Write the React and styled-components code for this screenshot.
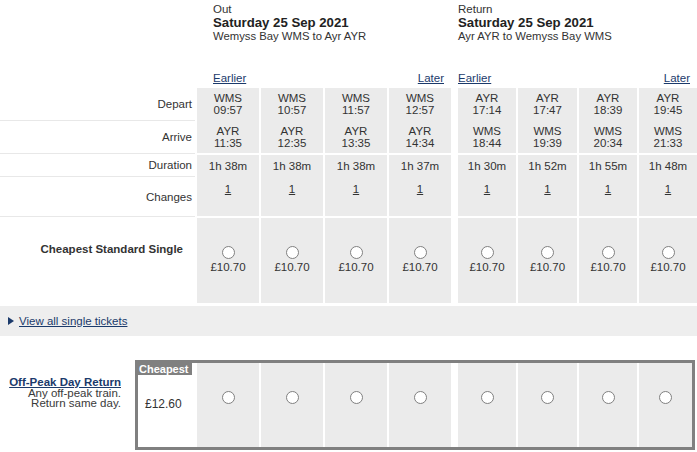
import styled, { createGlobalStyle } from 'styled-components';

const cellGrey = '#ebebeb';
const link = '#1b3a6b';
const text = '#333';

const COLS = '195px repeat(4, 62px) 3px 58px 59px 58px 58px';

const journeys = [
  { from: 'WMS', dep: '09:57', to: 'AYR', arr: '11:35', dur: '1h 38m', col: 2 },
  { from: 'WMS', dep: '10:57', to: 'AYR', arr: '12:35', dur: '1h 38m', col: 3 },
  { from: 'WMS', dep: '11:57', to: 'AYR', arr: '13:35', dur: '1h 38m', col: 4 },
  { from: 'WMS', dep: '12:57', to: 'AYR', arr: '14:34', dur: '1h 37m', col: 5 },
  { from: 'AYR', dep: '17:14', to: 'WMS', arr: '18:44', dur: '1h 30m', col: 7 },
  { from: 'AYR', dep: '17:47', to: 'WMS', arr: '19:39', dur: '1h 52m', col: 8 },
  { from: 'AYR', dep: '18:39', to: 'WMS', arr: '20:34', dur: '1h 55m', col: 9 },
  { from: 'AYR', dep: '19:45', to: 'WMS', arr: '21:33', dur: '1h 48m', col: 10 },
];

const Global = createGlobalStyle`
  body {
    margin: 0;
    overflow: hidden;
    background: #fff;
    color: ${text};
    font-family: "Liberation Sans", Arial, sans-serif;
    font-size: 11.5px;
  }
`;

const Page = styled.div`
  width: 697px;
`;

const Grid = styled.div`
  display: grid;
  grid-template-columns: ${COLS};
  column-gap: 2px;
`;

const HeaderGrid = styled(Grid)`
  height: 72px;
`;

const Leg = styled.div`
  grid-column: ${(p) => p.span};
  padding-top: 3px;
  padding-left: ${(p) => (p.indent ? '16px' : '0')};
  line-height: 13px;
`;

const LegDate = styled.div`
  font-size: 13.2px;
  font-weight: bold;
  line-height: 14px;
  color: #222;
`;

const LegRoute = styled.div`
  font-size: 11.3px;
`;

const NavGrid = styled(Grid)`
  height: 16px;
  line-height: 13px;
`;

const Nav = styled.div`
  grid-column: ${(p) => p.span};
  display: flex;
  justify-content: space-between;
  padding-left: ${(p) => (p.indent ? '16px' : '0')};
  padding-right: 7px;
`;

const NavLink = styled.a`
  color: ${link};
  text-decoration: underline;
  cursor: pointer;
`;

const BodyGrid = styled(Grid)`
  grid-template-rows: 32px 31px 21px 38px 85px;
  row-gap: 2px;
`;

const Label = styled.div`
  grid-column: 1;
  grid-row: ${(p) => p.row};
  display: flex;
  justify-content: flex-end;
  align-items: ${(p) => (p.top ? 'flex-start' : 'center')};
  padding-right: ${(p) => (p.top ? '12px' : '3px')};
  padding-top: ${(p) => (p.top ? '25px' : '0')};
  font-weight: ${(p) => (p.top ? 'bold' : 'normal')};
  line-height: 13px;
  box-shadow: ${(p) => (p.top ? 'none' : '0 1px 0 #e8e8e8')};
`;

const Cell = styled.div`
  grid-column: ${(p) => p.col};
  grid-row: ${(p) => p.rows};
  background: ${cellGrey};
  display: flex;
  flex-direction: column;
  align-items: center;
  text-align: center;
`;

const TimeBlock = styled.div`
  height: ${(p) => p.h}px;
  display: flex;
  flex-direction: column;
  justify-content: center;
  line-height: 12px;
`;

const Duration = styled.div`
  height: 23px;
  display: flex;
  align-items: center;
  line-height: 13px;
  padding-bottom: 2px;
`;

const Changes = styled.a`
  margin-top: 3px;
  color: ${text};
  text-decoration: underline;
  line-height: 13px;
`;

const Radio = styled.span`
  display: block;
  box-sizing: border-box;
  width: 13px;
  height: 13px;
  border: 1px solid #808080;
  border-radius: 50%;
  background: #fff;
  margin-top: ${(p) => p.top}px;
`;

const Price = styled.div`
  margin-top: 2px;
  line-height: 13px;
`;

const ViewBar = styled.div`
  margin-top: 3px;
  height: 30px;
  background: #eeeeee;
  display: flex;
  align-items: center;
  padding-left: 8px;
  gap: 5px;
`;

const Triangle = styled.span`
  width: 0;
  height: 0;
  border-top: 4px solid transparent;
  border-bottom: 4px solid transparent;
  border-left: 6px solid ${link};
`;

const Offer = styled.div`
  margin-top: 24px;
  display: flex;
`;

const OfferLabel = styled.div`
  width: 135px;
  box-sizing: border-box;
  padding: 17px 14px 0 0;
  text-align: right;
  line-height: 10.5px;
  color: #3a3a3a;
`;

const OfferName = styled.a`
  display: block;
  color: ${link};
  font-weight: bold;
  text-decoration: underline;
`;

const OfferBox = styled.div`
  width: 560px;
  box-sizing: border-box;
  border: 3px solid #808080;
  display: grid;
  grid-template-columns: 57px repeat(4, 62px) 3px 58px 59px 58px 53px;
  grid-template-rows: 84px;
  column-gap: 2px;
`;

const FareCell = styled.div`
  display: flex;
  flex-direction: column;
  align-items: flex-start;
`;

const CheapestTag = styled.div`
  width: 54px;
  height: 12px;
  box-sizing: border-box;
  padding-left: 1px;
  background: #808080;
  color: #fff;
  font-size: 11px;
  font-weight: bold;
  line-height: 12px;
`;

const FarePrice = styled.div`
  margin-top: 23px;
  padding-left: 7px;
  font-size: 12px;
  line-height: 13px;
`;

const BoxCell = styled.div`
  grid-column: ${(p) => p.col};
  background: ${cellGrey};
  display: flex;
  justify-content: center;
`;

export default function App() {
  return (
    <Page>
      <Global />
      <HeaderGrid>
        <Leg span="2 / 6" indent>
          <div>Out</div>
          <LegDate>Saturday 25 Sep 2021</LegDate>
          <LegRoute>Wemyss Bay WMS to Ayr AYR</LegRoute>
        </Leg>
        <Leg span="7 / 11">
          <div>Return</div>
          <LegDate>Saturday 25 Sep 2021</LegDate>
          <LegRoute>Ayr AYR to Wemyss Bay WMS</LegRoute>
        </Leg>
      </HeaderGrid>

      <NavGrid>
        <Nav span="2 / 6" indent>
          <NavLink>Earlier</NavLink>
          <NavLink>Later</NavLink>
        </Nav>
        <Nav span="7 / 11">
          <NavLink>Earlier</NavLink>
          <NavLink>Later</NavLink>
        </Nav>
      </NavGrid>

      <BodyGrid>
        <Label row={1}>Depart</Label>
        <Label row={2}>Arrive</Label>
        <Label row={3}>Duration</Label>
        <Label row={4}>Changes</Label>
        <Label row={5} top>Cheapest Standard Single</Label>
        {journeys.map((j) => (
          <Cell key={`t${j.col}`} col={j.col} rows="1 / 3">
            <TimeBlock h={32}>
              <div>{j.from}</div>
              <div>{j.dep}</div>
            </TimeBlock>
            <TimeBlock h={33}>
              <div>{j.to}</div>
              <div>{j.arr}</div>
            </TimeBlock>
          </Cell>
        ))}
        {journeys.map((j) => (
          <Cell key={`d${j.col}`} col={j.col} rows="3 / 5">
            <Duration>{j.dur}</Duration>
            <Changes>1</Changes>
          </Cell>
        ))}
        {journeys.map((j) => (
          <Cell key={`p${j.col}`} col={j.col} rows="5">
            <Radio top={28} />
            <Price>£10.70</Price>
          </Cell>
        ))}
      </BodyGrid>

      <ViewBar>
        <Triangle />
        <NavLink>View all single tickets</NavLink>
      </ViewBar>

      <Offer>
        <OfferLabel>
          <OfferName>Off-Peak Day Return</OfferName>
          <div>Any off-peak train.</div>
          <div>Return same day.</div>
        </OfferLabel>
        <OfferBox>
          <FareCell>
            <CheapestTag>Cheapest</CheapestTag>
            <FarePrice>£12.60</FarePrice>
          </FareCell>
          {journeys.map((j) => (
            <BoxCell key={`b${j.col}`} col={j.col}>
              <Radio top={28} />
            </BoxCell>
          ))}
        </OfferBox>
      </Offer>
    </Page>
  );
}
